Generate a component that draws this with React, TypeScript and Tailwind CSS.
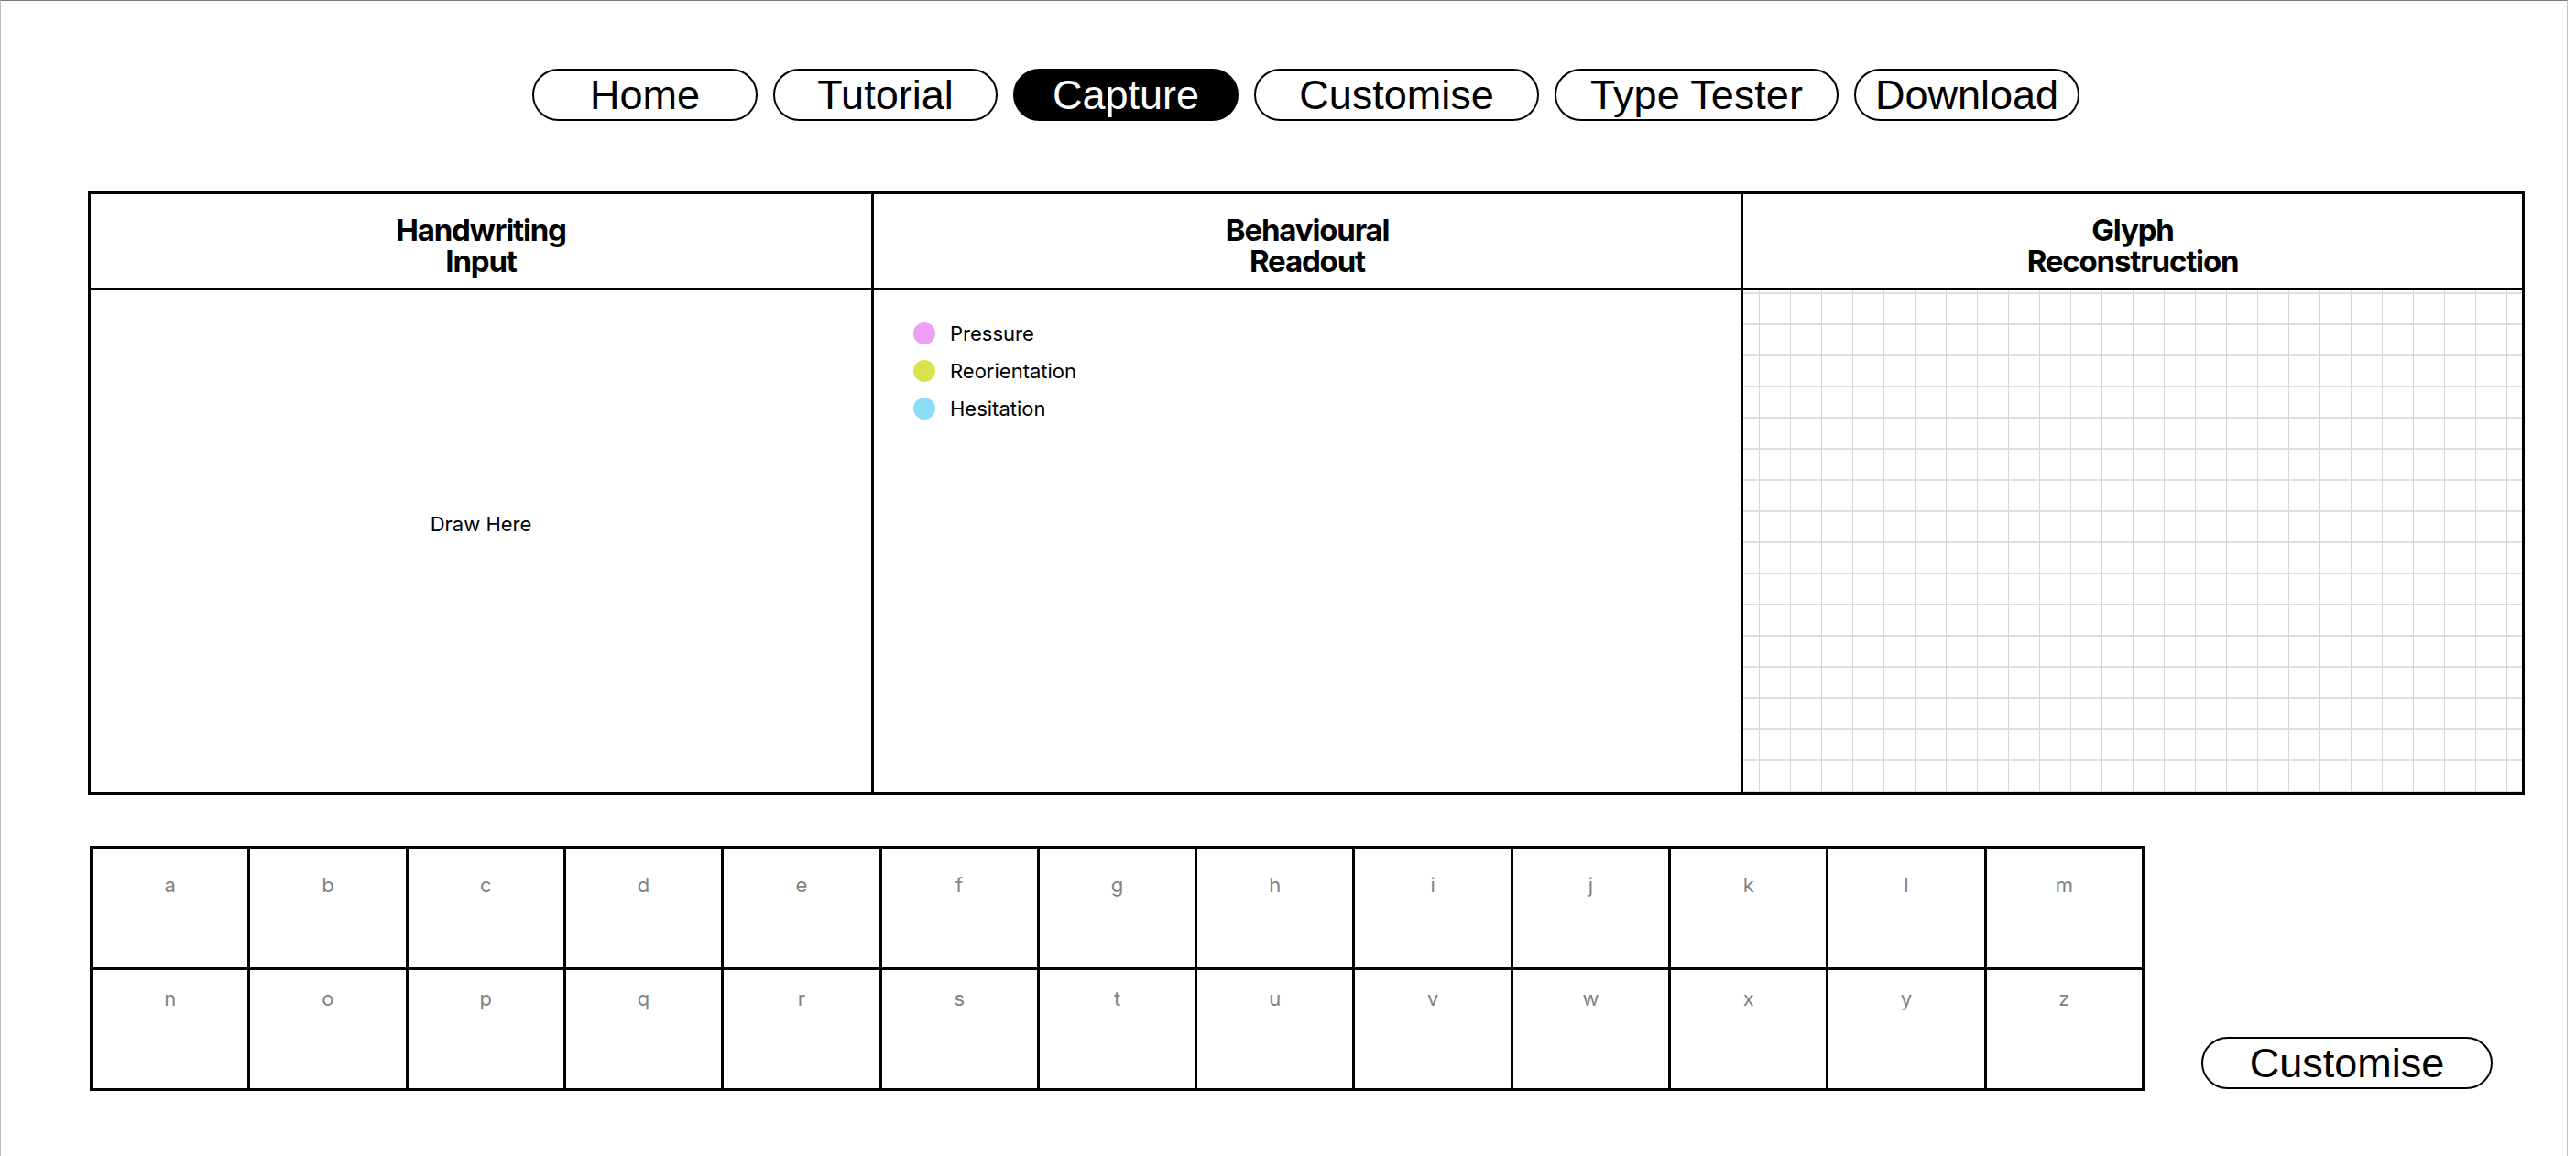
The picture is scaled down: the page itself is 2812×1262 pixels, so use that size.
import React from "react";

const navItems = [
  { label: "Home", width: "w-[246px]", active: false },
  { label: "Tutorial", width: "w-[245px]", active: false },
  { label: "Capture", width: "w-[246px]", active: true },
  { label: "Customise", width: "w-[311px]", active: false },
  { label: "Type Tester", width: "w-[310px]", active: false },
  { label: "Download", width: "w-[246px]", active: false },
];

const legend = [
  { label: "Pressure", dot: "bg-[#ef9ff3]" },
  { label: "Reorientation", dot: "bg-[#dbe24f]" },
  { label: "Hesitation", dot: "bg-[#8ddcf7]" },
];

const rowOne = "abcdefghijklm".split("");
const rowTwo = "nopqrstuvwxyz".split("");

const PillButton: React.FC<{ label: string; width: string; active?: boolean }> = ({
  label,
  width,
  active = false,
}) => (
  <button
    className={`${width} h-[57px] rounded-full border-2 border-black flex items-center justify-center font-['Liberation_Sans',Arial,sans-serif] text-[45px] leading-none ${
      active ? "bg-black text-white" : "bg-white text-black"
    }`}
  >
    {label}
  </button>
);

const HeaderCell: React.FC<{ lines: [string, string]; divider?: boolean }> = ({ lines, divider }) => (
  <div
    className={`h-[105px] border-b-[3px] border-black flex flex-col items-center justify-center pt-[10px] ${
      divider ? "border-r-[3px]" : ""
    }`}
  >
    <h2 className="text-center font-bold text-[33px] leading-[34px] tracking-[-0.035em]">
      {lines[0]}
      <br />
      {lines[1]}
    </h2>
  </div>
);

export default function App() {
  return (
    <div className="w-[2803px] h-[1262px] overflow-hidden bg-white text-black border-t border-l border-r border-t-[#7a7a7a] border-l-[#bdbdbd] border-r-[#c4c4c4] font-['Inter',sans-serif]">
      <nav className="flex gap-[17px] pl-[580px] pt-[74px]">
        {navItems.map((item) => (
          <PillButton key={item.label} label={item.label} width={item.width} active={item.active} />
        ))}
      </nav>

      <section className="ml-[95px] mt-[77px] w-[2660px] border-[3px] border-black grid grid-cols-[855px_949px_1fr]">
        <HeaderCell lines={["Handwriting", "Input"]} divider />
        <HeaderCell lines={["Behavioural", "Readout"]} divider />
        <HeaderCell lines={["Glyph", "Reconstruction"]} />

        {/* drawing canvas */}
        <div className="h-[548px] border-r-[3px] border-black flex items-center justify-center pb-[38px]">
          <span className="text-[22px] leading-[30px]">Draw Here</span>
        </div>

        {/* readout legend */}
        <div className="h-[548px] border-r-[3px] border-black pt-[35px] pl-[43px] flex flex-col gap-[17px]">
          {legend.map((item) => (
            <div key={item.label} className="flex items-center gap-[16px] h-[24px]">
              <span className={`w-[24px] h-[24px] rounded-full ${item.dot}`} />
              <span className="text-[22px] leading-[24px]">{item.label}</span>
            </div>
          ))}
        </div>

        {/* glyph grid */}
        <div className="h-[548px] [background-image:linear-gradient(to_right,#d6d6d6_1px,transparent_1px),linear-gradient(to_bottom,#dedede_2px,transparent_2px)] [background-size:34px_34px] [background-position:17px_2px]" />
      </section>

      <div className="flex items-end ml-[97px] mt-[56px]">
        <div className="w-[2243px] grid grid-cols-[repeat(13,minmax(0,1fr))] border-l-[3px] border-t-[3px] border-black">
          {rowOne.map((ch) => (
            <div
              key={ch}
              className="h-[132px] border-r-[3px] border-b-[3px] border-black text-center pt-[24px] text-[22px] leading-[30px] text-[#828282]"
            >
              {ch}
            </div>
          ))}
          {rowTwo.map((ch) => (
            <div
              key={ch}
              className="h-[132px] border-r-[3px] border-b-[3px] border-black text-center pt-[16px] text-[22px] leading-[30px] text-[#828282]"
            >
              {ch}
            </div>
          ))}
        </div>
        <div className="ml-[62px] mb-[2px]">
          <PillButton label="Customise" width="w-[318px]" />
        </div>
      </div>
    </div>
  );
}
